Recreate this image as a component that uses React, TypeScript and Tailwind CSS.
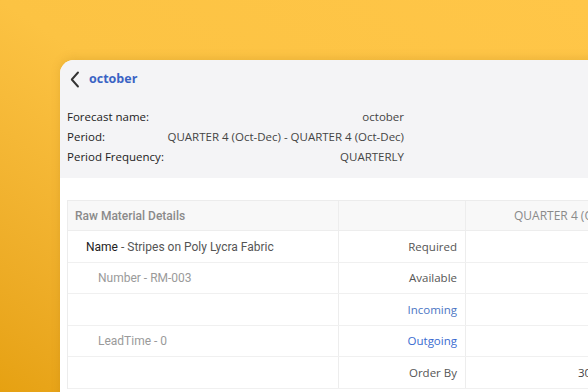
import React from 'react';

const info = [
  { label: 'Forecast name:', value: 'october' },
  { label: 'Period:', value: 'QUARTER 4 (Oct-Dec) - QUARTER 4 (Oct-Dec)' },
  { label: 'Period Frequency:', value: 'QUARTERLY' },
];

// left column content for each body row
const rows = [
  { left: 'name', metric: 'Required', tone: 'text-[#555]', value: '' },
  { left: 'Number - RM-003', metric: 'Available', tone: 'text-[#555]', value: '' },
  { left: '', metric: 'Incoming', tone: 'text-[#4b76c4]', value: '' },
  { left: 'LeadTime - 0', metric: 'Outgoing', tone: 'text-[#3a6bd0]', value: '' },
  { left: '', metric: 'Order By', tone: 'text-[#555]', value: '30 Sep 2023' },
];

export default function App() {
  return (
    <div className="w-[588px] h-[392px] overflow-hidden bg-gradient-to-bl from-[#ffc648] via-[#fcc343] to-[#e6a111] pl-[60px] pt-[60px]">
      <div className="w-[720px] h-[400px] rounded-tl-[14px] overflow-hidden bg-white shadow-[0_-2px_10px_rgba(150,100,0,0.18)]">
        {/* header */}
        <div className="bg-[#f4f4f6] pl-[7px] pb-[11px] font-['Open_Sans',sans-serif]">
          <div className="flex items-center h-[38px] pl-[3px] pt-[1px]">
            <svg width="10" height="17" viewBox="0 0 10 17" className="mr-[9px]">
              <path d="M8 1.5 L1.8 8.5 L8 15.5" fill="none" stroke="#333" strokeWidth="1.9" strokeLinecap="round" strokeLinejoin="round" />
            </svg>
            <span className="text-[12.5px] font-bold text-[#3a63c4]">october</span>
          </div>
          <div className="mt-[9px] w-[337px]">
            {info.map((r) => (
              <div key={r.label} className="flex h-[20px] items-center justify-between text-[11.5px]">
                <span className="text-[#222]">{r.label}</span>
                <span className="text-[#444]">{r.value}</span>
              </div>
            ))}
          </div>
        </div>

        {/* table */}
        <div className="pt-[22px] pl-[7px]">
          <div className="border-t border-l border-[#ececec]">
            <div className="flex h-[30px] bg-[#f8f8f8] border-b border-[#ededed]">
              <div className="w-[271px] border-r border-[#ededed] flex items-center pl-[7px] font-['Roboto',sans-serif] font-medium text-[12px] text-[#8a8a8a]">
                Raw Material Details
              </div>
              <div className="w-[127px] border-r border-[#ededed]" />
              <div className="w-[228px] flex items-center pl-[48px] font-['Open_Sans',sans-serif] text-[12px] text-[#8a8a8a] whitespace-nowrap">
                QUARTER 4 (Oct-Dec)
              </div>
            </div>
            {rows.map((r, i) => (
              <div key={i} className={`flex ${i % 2 === 0 ? 'h-[32px]' : 'h-[31px]'} border-b border-[#f0f0f0]`}>
                <div className="w-[271px] border-r border-[#ededed] flex items-center font-['Roboto',sans-serif] text-[12px]">
                  {r.left === 'name' ? (
                    <span className="pl-[18px] text-[#555]">
                      <span className="text-[#222]">Name</span> - Stripes on Poly Lycra Fabric
                    </span>
                  ) : (
                    <span className="pl-[30px] text-[#9a9a9a]">{r.left}</span>
                  )}
                </div>
                <div className={`w-[127px] border-r border-[#ededed] flex items-center justify-end pr-[8px] font-['Open_Sans',sans-serif] text-[11.5px] ${r.tone}`}>
                  {r.metric}
                </div>
                <div className="w-[228px] flex items-center pl-[112px] font-['Open_Sans',sans-serif] text-[11.5px] text-[#444] whitespace-nowrap">
                  {r.value}
                </div>
              </div>
            ))}
          </div>
        </div>
      </div>
    </div>
  );
}
